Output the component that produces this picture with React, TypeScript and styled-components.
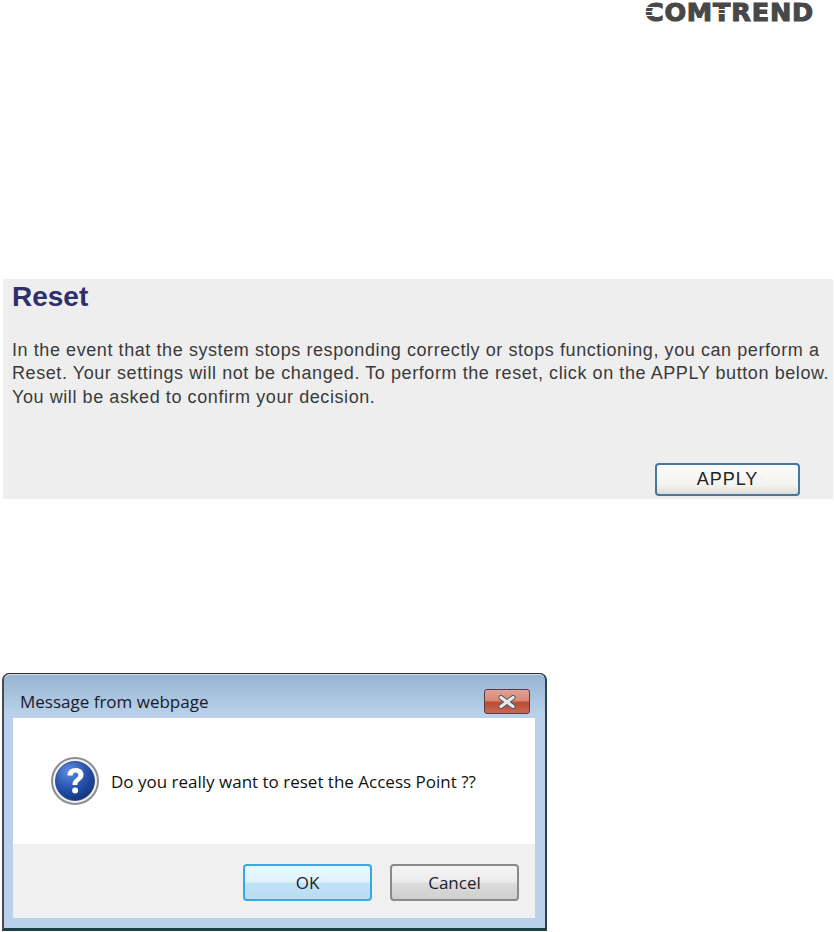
import React from "react";
import styled, { createGlobalStyle } from "styled-components";

const Global = createGlobalStyle`
  html, body { margin: 0; padding: 0; background: #fff; }
  body { width: 834px; height: 932px; overflow: hidden; }
`;

const Page = styled.div`
  display: flex;
  flex-direction: column;
  width: 834px;
  height: 932px;
`;

const Header = styled.header`
  display: flex;
  justify-content: flex-end;
  align-items: flex-start;
  padding: 0 20px 0 0;
  height: 279px;
  box-sizing: border-box;
`;

const Logo = styled.div`
  position: relative;
  font-family: "DejaVu Sans", sans-serif;
  font-weight: 700;
  font-size: 25.5px;
  line-height: 24px;
  letter-spacing: 0.8px;
  color: #484848;
  -webkit-text-stroke: 1.1px #484848;
  white-space: nowrap;

  &::before {
    content: "";
    position: absolute;
    left: 0;
    top: 7px;
    width: 10px;
    height: 9px;
    background: repeating-linear-gradient(#fff 0 1px, transparent 1px 4px);
  }

  &::after {
    content: "";
    position: absolute;
    left: 74px;
    top: 9px;
    width: 7px;
    height: 6px;
    background: repeating-linear-gradient(#fff 0 1px, transparent 1px 4px);
  }
`;

const Panel = styled.section`
  display: flex;
  flex-direction: column;
  box-sizing: border-box;
  margin-left: 3px;
  width: 830px;
  height: 220px;
  padding: 0 0 0 9px;
  background: #eeeeee;
  font-family: "Liberation Sans", Arial, sans-serif;
`;

const Title = styled.h1`
  margin: 0;
  padding-top: 2px;
  font-size: 28px;
  line-height: 32px;
  font-weight: 700;
  color: #2f2f6b;
`;

const Body = styled.p`
  margin: 26px 0 0;
  font-size: 18px;
  line-height: 23.3px;
  letter-spacing: 0.58px;
  color: #3a3a3a;
  white-space: nowrap;
`;

const PanelActions = styled.div`
  display: flex;
  justify-content: flex-end;
  margin-top: auto;
  padding: 0 33px 3px 0;
`;

const ApplyButton = styled.button`
  width: 145px;
  height: 33px;
  padding: 0;
  border: 2px solid #49759f;
  border-radius: 4px;
  background: linear-gradient(#fbfbf9 0%, #f4f3ef 70%, #dedcd4 100%);
  font-family: "Liberation Sans", Arial, sans-serif;
  font-size: 18px;
  letter-spacing: 1px;
  color: #222;
`;

const Dialog = styled.div`
  display: flex;
  flex-direction: column;
  box-sizing: border-box;
  margin: 174px 0 0 2px;
  width: 545px;
  height: 258px;
  border: 1px solid #2b2b2b;
  border-left: 2px solid #4a4a4a;
  border-right: 2px solid #2d4450;
  border-bottom: 3px solid #1c3f48;
  border-radius: 7px 7px 0 0;
  background: linear-gradient(#97b4d1 0%, #b9d1ea 16%, #b9d1ea 100%);
  box-shadow: inset 0 1px 0 #d8e2ec;
  font-family: "Open Sans", "Noto Sans", sans-serif;
`;

const TitleBar = styled.div`
  display: flex;
  align-items: flex-start;
  justify-content: space-between;
  height: 44px;
  padding: 15px 15px 0 16px;
  box-sizing: border-box;
`;

const DialogTitle = styled.span`
  font-size: 17px;
  line-height: 25px;
  color: #1a1a2a;
`;

const CloseButton = styled.button`
  display: flex;
  align-items: center;
  justify-content: center;
  width: 46px;
  height: 25px;
  padding: 0;
  border: 1px solid #5c3a44;
  border-radius: 3px;
  background: linear-gradient(#e3a092 0%, #d88a7a 45%, #bb4a34 55%, #c66a55 100%);
`;

const Inner = styled.div`
  display: flex;
  flex-direction: column;
  flex: 1;
  margin: 0 10px 10px 9px;
`;

const MessageRow = styled.div`
  display: flex;
  align-items: center;
  gap: 11px;
  height: 126px;
  padding: 0 0 0 37px;
  box-sizing: border-box;
  background: #fff;
`;

const Message = styled.span`
  font-size: 17px;
  color: #111;
`;

const Footer = styled.div`
  display: flex;
  justify-content: flex-end;
  gap: 18px;
  flex: 1;
  padding: 20px 16px 0 0;
  background: #f0f0f0;
`;

const DialogButton = styled.button<{ $primary?: boolean }>`
  width: 129px;
  height: 37px;
  padding: 0;
  border-radius: 4px;
  border: 2px solid ${(p) => (p.$primary ? "#3aa8e0" : "#8a8a8a")};
  background: ${(p) =>
    p.$primary
      ? "linear-gradient(#ebf7fe 0%, #e0f2fd 48%, #bfe3f7 52%, #b8def5 100%)"
      : "linear-gradient(#f4f4f4 0%, #ebebeb 48%, #dcdcdc 52%, #cfcfcf 100%)"};
  font-family: "Open Sans", "Noto Sans", sans-serif;
  font-size: 17px;
  color: #1c1c2c;
`;

const HelpIcon = () => (
  <svg width="50" height="50" viewBox="0 0 50 50" aria-hidden="true">
    <defs>
      <radialGradient id="helpFill" cx="0.35" cy="0.25" r="0.85">
        <stop offset="0" stopColor="#5f8fe0" />
        <stop offset="0.55" stopColor="#2450ae" />
        <stop offset="1" stopColor="#12306f" />
      </radialGradient>
    </defs>
    <circle cx="25" cy="25" r="23" fill="#eef0f3" stroke="#8a8f96" strokeWidth="2" />
    <circle cx="25" cy="25" r="19.5" fill="url(#helpFill)" stroke="#2a3f6e" strokeWidth="0.8" />
    <path
      d="M17.5 19.5c0-4.6 3.4-7.5 8-7.5s8 2.7 8 6.8c0 3-1.7 4.5-3.6 5.9-1.8 1.3-2.6 2.1-2.6 4.3h-4.8c0-3.4 1.1-5 3.3-6.6 1.6-1.2 2.5-1.9 2.5-3.4 0-1.5-1.1-2.6-2.6-2.6-1.8 0-2.9 1.2-3 3.1z"
      fill="#fff"
    />
    <circle cx="25.1" cy="34.4" r="3" fill="#fff" />
  </svg>
);

const CloseGlyph = () => (
  <svg width="20" height="14" viewBox="0 0 20 14" aria-hidden="true">
    <path d="M4 2.5l12 9M16 2.5l-12 9" stroke="#4e4e58" strokeWidth="5" strokeLinecap="round" />
    <path d="M4 2.5l12 9M16 2.5l-12 9" stroke="#e8eaee" strokeWidth="3.2" strokeLinecap="round" />
  </svg>
);

export default function App() {
  return (
    <Page>
      <Global />
      <Header>
        <Logo>COMTREND</Logo>
      </Header>
      <Panel>
        <Title>Reset</Title>
        <Body>
          In the event that the system stops responding correctly or stops functioning, you can perform a
          <br />
          Reset. Your settings will not be changed. To perform the reset, click on the APPLY button below.
          <br />
          You will be asked to confirm your decision.
        </Body>
        <PanelActions>
          <ApplyButton>APPLY</ApplyButton>
        </PanelActions>
      </Panel>
      <Dialog>
        <TitleBar>
          <DialogTitle>Message from webpage</DialogTitle>
          <CloseButton aria-label="Close">
            <CloseGlyph />
          </CloseButton>
        </TitleBar>
        <Inner>
          <MessageRow>
            <HelpIcon />
            <Message>Do you really want to reset the Access Point ??</Message>
          </MessageRow>
          <Footer>
            <DialogButton $primary>OK</DialogButton>
            <DialogButton>Cancel</DialogButton>
          </Footer>
        </Inner>
      </Dialog>
    </Page>
  );
}
